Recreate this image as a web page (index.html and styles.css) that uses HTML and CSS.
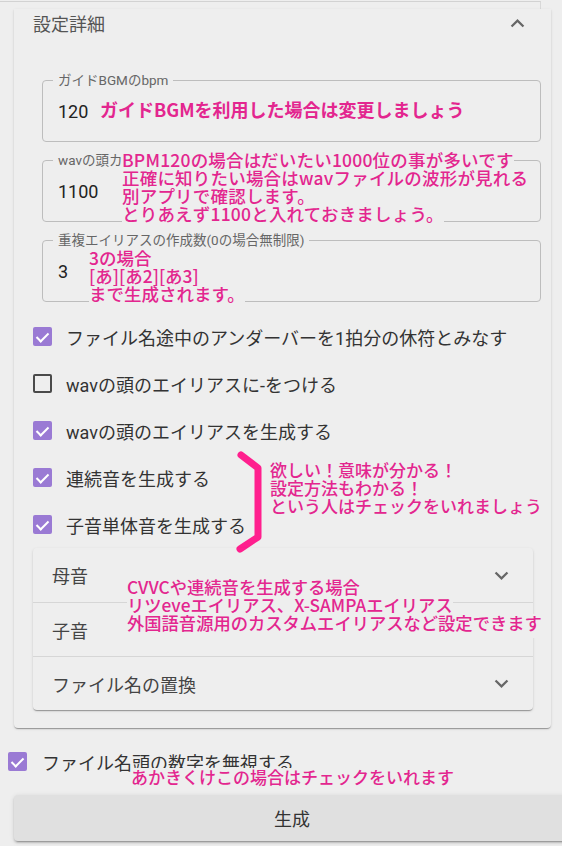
FILE: index.html
```html
<!DOCTYPE html>
<html lang="ja">
<head>
    <meta charset="UTF-8">
    <meta name="viewport" content="width=device-width, initial-scale=1.0">
    <title>設定詳細</title>
    <link rel="stylesheet" href="styles.css">
</head>
<body>
    <div class="top-edge"></div>

    <section class="panel">
        <div class="panel-head">
            <span>設定詳細</span>
            <svg class="chevron" viewBox="0 0 24 24"><path d="m12 8-6 6 1.41 1.41L12 10.83l4.59 4.58L18 14z"/></svg>
        </div>

        <div class="panel-body">
            <div class="fields">
                <div class="field">
                    <span class="field-label">ガイドBGMのbpm</span>
                    <span class="field-value">120</span>
                    <div class="note note-bold note-bpm"><span>ガイドBGMを利用した場合は変更しましょう</span></div>
                </div>

                <div class="field">
                    <span class="field-label">wavの頭カット(ms)</span>
                    <span class="field-value">1100</span>
                    <div class="note note-cut">
                        <span>BPM120の場合はだいたい1000位の事が多いです</span>
                        <span>正確に知りたい場合はwavファイルの波形が見れる</span>
                        <span>別アプリで確認します。</span>
                        <span>とりあえず1100と入れておきましょう。</span>
                    </div>
                </div>

                <div class="field">
                    <span class="field-label">重複エイリアスの作成数(0の場合無制限)</span>
                    <span class="field-value">3</span>
                    <div class="note note-dup">
                        <span>3の場合</span>
                        <span>[あ][あ2][あ3]</span>
                        <span>まで生成されます。</span>
                    </div>
                </div>
            </div>

            <div class="checks">
                <label class="check"><span class="box checked"></span>ファイル名途中のアンダーバーを1拍分の休符とみなす</label>
                <label class="check"><span class="box"></span>wavの頭のエイリアスに-をつける</label>
                <label class="check"><span class="box checked"></span>wavの頭のエイリアスを生成する</label>
                <label class="check"><span class="box checked"></span>連続音を生成する</label>
                <label class="check"><span class="box checked"></span>子音単体音を生成する</label>

                <svg class="brace" width="34" height="104" viewBox="0 0 34 104"><path d="M8 6 L25 19 L25 88 L7 100"/></svg>
                <div class="note note-want">
                    <span>欲しい！意味が分かる！</span>
                    <span>設定方法もわかる！</span>
                    <span>という人はチェックをいれましょう</span>
                </div>
            </div>

            <div class="sub-list">
                <div class="sub-row">母音<svg class="chevron" viewBox="0 0 24 24"><path d="M16.59 8.59 12 13.17 7.41 8.59 6 10l6 6 6-6z"/></svg></div>
                <div class="sub-row">子音<svg class="chevron" viewBox="0 0 24 24"><path d="M16.59 8.59 12 13.17 7.41 8.59 6 10l6 6 6-6z"/></svg></div>
                <div class="sub-row">ファイル名の置換<svg class="chevron" viewBox="0 0 24 24"><path d="M16.59 8.59 12 13.17 7.41 8.59 6 10l6 6 6-6z"/></svg></div>
                <div class="note note-cvvc">
                    <span>CVVCや連続音を生成する場合</span>
                    <span>リツeveエイリアス、X-SAMPAエイリアス</span>
                    <span>外国語音源用のカスタムエイリアスなど設定できます</span>
                </div>
            </div>
        </div>
    </section>

    <div class="bottom-row">
        <label class="check"><span class="box checked"></span>ファイル名頭の数字を無視する</label>
        <div class="note note-head"><span>あかきくけこの場合はチェックをいれます</span></div>
    </div>

    <button class="generate">生成</button>
</body>
</html>
```

FILE: styles.css
```css
/* page */
* {
    box-sizing: border-box;
}
body {
    margin: 0;
    width: 562px;
    height: 846px;
    overflow: hidden;
    background-color: #eeeeee;
    color: #333;
    font-family: Roboto, "Noto Sans CJK JP", sans-serif;
}
.top-edge {
    width: 541px;
    height: 8px;
    margin-top: 1px;
    border-top: 1px solid #d2d2d2;
    border-right: 1px solid #d8d8d8;
}

/* outer accordion */
.panel {
    margin-left: 14px;
    width: 537px;
    padding-bottom: 18px;
    background-color: #eeeeee;
    border-radius: 0 0 4px 4px;
    box-shadow: 0 2px 1px -1px rgba(0,0,0,0.2), 0 1px 1px 0 rgba(0,0,0,0.14), 0 1px 3px 0 rgba(0,0,0,0.12);
}
.panel-head {
    height: 28px;
    padding: 0 20px 0 19px;
    display: flex;
    align-items: center;
    justify-content: space-between;
    font-size: 18px;
    color: #555;
}
.chevron {
    width: 27px;
    height: 27px;
    fill: #666;
}
.panel-body {
    padding: 43px 10px 0 28px;
}

/* outlined text fields */
.fields {
    display: flex;
    flex-direction: column;
    gap: 18px;
}
.field {
    position: relative;
    height: 62px;
    padding-left: 15px;
    display: flex;
    align-items: center;
    border: 1px solid #bdbdbd;
    border-radius: 4px;
}
.field-label {
    position: absolute;
    top: -9px;
    left: 10px;
    padding: 0 5px;
    background-color: #eeeeee;
    font-size: 13.5px;
    line-height: 16px;
    color: #666;
}
.field-value {
    font-size: 18px;
    color: #222;
}

/* hand-written notes laid over the form */
.note {
    position: absolute;
    z-index: 2;
    color: #e3268f;
    font-family: "Noto Sans CJK JP", sans-serif;
    font-size: 17.5px;
    font-weight: 500;
    line-height: 18px;
    white-space: nowrap;
}
.note span {
    display: block;
    width: fit-content;
    background-color: #eeeeee;
}
.note-bold {
    font-size: 18px;
    font-weight: 700;
    line-height: 20px;
}
.note-bpm {
    left: 57px;
    top: 18px;
}
.note-cut {
    left: 79px;
    top: -10px;
    letter-spacing: 0.2px;
}
.note-dup {
    left: 46px;
    top: 8px;
}
.note-want {
    left: 237px;
    top: 148px;
    font-size: 17px;
}
.note-cvvc {
    left: 94px;
    top: 30px;
    font-size: 17.3px;
}
.note-cvvc span:last-child {
    padding-bottom: 6px;
}
.note-head {
    left: 131px;
    top: 30px;
    font-size: 17px;
}

/* checkboxes */
.checks {
    position: relative;
    margin: 11px 0 0 -9px;
}
.check {
    height: 47px;
    display: flex;
    align-items: center;
    gap: 14px;
    font-size: 18px;
    color: #333;
}
.box {
    width: 19px;
    height: 19px;
    flex-shrink: 0;
    border: 2px solid #4a4a4a;
    border-radius: 2px;
    position: relative;
}
.box.checked {
    border: none;
    background-color: #9a7ad4;
}
.box.checked::after {
    content: "";
    position: absolute;
    left: 6px;
    top: 3px;
    width: 5px;
    height: 10px;
    border: solid #fff;
    border-width: 0 2px 2px 0;
    transform: rotate(45deg);
}
.brace {
    position: absolute;
    left: 200px;
    top: 136px;
    overflow: visible;
}
.brace path {
    fill: none;
    stroke: #ff1f8e;
    stroke-width: 7;
    stroke-linecap: round;
    stroke-linejoin: round;
}

/* inner accordion */
.sub-list {
    position: relative;
    margin-left: -9px;
    width: 500px;
    border-radius: 4px;
    box-shadow: 0 2px 1px -1px rgba(0,0,0,0.2), 0 1px 1px 0 rgba(0,0,0,0.14), 0 1px 3px 0 rgba(0,0,0,0.12);
}
.sub-row {
    height: 54px;
    padding: 0 18px 0 19px;
    display: flex;
    align-items: center;
    justify-content: space-between;
    font-size: 18px;
    color: #444;
}
.sub-row + .sub-row {
    border-top: 1px solid #d6d6d6;
}

/* bottom */
.bottom-row {
    position: relative;
    margin-top: 10px;
    padding-left: 8px;
}
.bottom-row .check {
    gap: 15px;
}
.generate {
    display: block;
    margin: 10px 0 0 14px;
    width: 556px;
    height: 46px;
    border: none;
    border-radius: 4px;
    background-color: #e0e0e0;
    box-shadow: 0 3px 1px -2px rgba(0,0,0,0.2), 0 2px 2px 0 rgba(0,0,0,0.14), 0 1px 5px 0 rgba(0,0,0,0.12);
    font-family: Roboto, "Noto Sans CJK JP", sans-serif;
    font-size: 18px;
    color: #333;
}
```
